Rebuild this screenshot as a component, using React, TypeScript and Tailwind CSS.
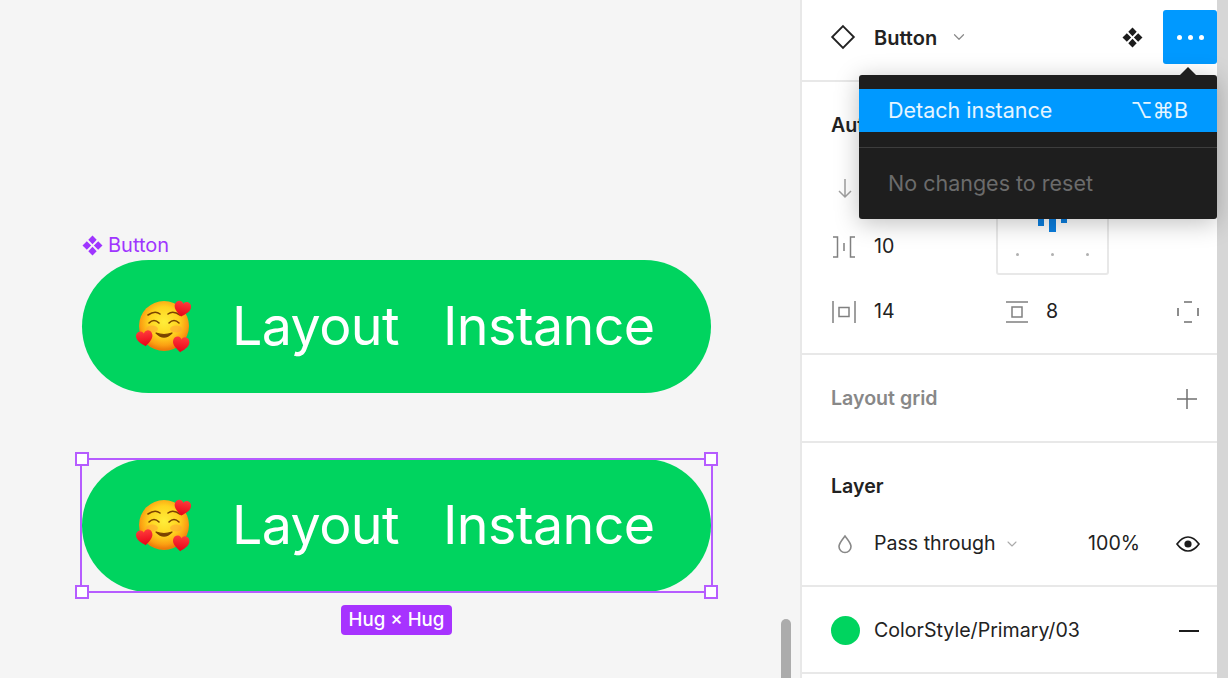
import React from "react";
import { ChevronDown } from "lucide-react";

const ComponentIcon = ({ className = "" }: { className?: string }) => (
  <svg viewBox="0 0 20 20" className={className} fill="currentColor">
    <path d="M10 0.5 L14 4.6 L10 8.7 L6 4.6 Z" />
    <path d="M10 11.3 L14 15.4 L10 19.5 L6 15.4 Z" />
    <path d="M4.6 6 L8.7 10 L4.6 14 L0.5 10 Z" />
    <path d="M15.4 6 L19.5 10 L15.4 14 L11.3 10 Z" />
  </svg>
);

const Heart = ({ x, y, s = 1, r = 0 }: { x: number; y: number; s?: number; r?: number }) => (
  <path
    transform={`translate(${x} ${y}) rotate(${r}) scale(${s})`}
    d="M0 7.5 C-3 5 -7.5 2.2 -7.5 -2 C-7.5 -5 -5.2 -6.5 -3.4 -6.5 C-1.8 -6.5 -0.6 -5.6 0 -4.2 C0.6 -5.6 1.8 -6.5 3.4 -6.5 C5.2 -6.5 7.5 -5 7.5 -2 C7.5 2.2 3 5 0 7.5 Z"
    fill="url(#heart-fill)"
  />
);

const Emoji = ({ id }: { id: string }) => (
  <svg viewBox="0 0 56 56" className="w-[56px] h-[56px] shrink-0">
    <defs>
      <radialGradient id={`${id}-face`} cx="50%" cy="42%" r="55%">
        <stop offset="0%" stopColor="#ffee3a" />
        <stop offset="55%" stopColor="#ffd21f" />
        <stop offset="85%" stopColor="#fb9f12" />
        <stop offset="100%" stopColor="#ee7c0a" />
      </radialGradient>
      <linearGradient id="heart-fill" x1="0" y1="0" x2="0" y2="1">
        <stop offset="0%" stopColor="#ff3b3b" />
        <stop offset="100%" stopColor="#e80018" />
      </linearGradient>
    </defs>
    <circle cx="29" cy="28" r="25" fill={`url(#${id}-face)`} />
    <ellipse cx="17" cy="31" rx="6" ry="3.5" fill="#ff9a3a" opacity="0.45" />
    <ellipse cx="41" cy="31" rx="6" ry="3.5" fill="#ff9a3a" opacity="0.45" />
    <g fill="none" stroke="#7a4300" strokeWidth="1.6" strokeLinecap="round">
      <path d="M13 17 Q20 12 25 16" />
      <path d="M33 16 Q38 12 45 17" />
      <path d="M14 25 Q19 20 24 25" />
      <path d="M34 25 Q39 20 44 25" />
    </g>
    <path d="M21 35 Q29 43 37 35 Q29 38 21 35 Z" fill="#7a4300" stroke="#7a4300" strokeWidth="1.2" strokeLinejoin="round" />
    <Heart x={47.5} y={10.5} s={1.1} r={10} />
    <Heart x={9.5} y={40} s={1.1} r={-8} />
    <Heart x={46} y={46} s={1.1} r={6} />
  </svg>
);

const PillButton = ({ id }: { id: string }) => (
  <div className="flex items-center w-[629px] h-[132.5px] rounded-full bg-[#00d45f] pl-[53px] text-white text-[53.75px] leading-none tracking-[-0.6px]">
    <Emoji id={id} />
    <span className="ml-[41px]">Layout</span>
    <span className="ml-[44px]">Instance</span>
  </div>
);

const Handle = ({ className }: { className: string }) => (
  <span className={`absolute w-[14px] h-[14px] bg-white border-[2.5px] border-[#b65cff] ${className}`} />
);

const Canvas = () => (
  <div className="relative w-[800px] h-full bg-[#f5f5f5] pl-[82px] pt-[233px] overflow-hidden">
    <div className="flex items-center gap-[5px] h-[24px] mb-[3px] text-[#9f35ff] text-[20px]">
      <ComponentIcon className="w-[21px] h-[21px]" />
      <span>Button</span>
    </div>
    <PillButton id="first" />
    <div className="relative mt-[66.5px] w-[629px]">
      <PillButton id="second" />
      <div className="absolute -left-[2px] -right-[2px] -top-[1px] -bottom-[1px] border-[2.5px] border-[#b65cff]" />
      <Handle className="-left-[7px] -top-[7px]" />
      <Handle className="-right-[7px] -top-[7px]" />
      <Handle className="-left-[7px] -bottom-[7px]" />
      <Handle className="-right-[7px] -bottom-[7px]" />
      <div className="absolute left-[259px] top-[146px] h-[30px] w-[111px] pt-[1px] rounded-[4px] bg-[#a733ff] flex items-center justify-center text-white text-[18.7px] font-medium">
        Hug × Hug
      </div>
    </div>
    <div className="absolute left-[781px] top-[619px] w-[10px] h-[80px] rounded-full bg-[#acacac]" />
  </div>
);

const Section = ({ className = "", children }: { className?: string; children: React.ReactNode }) => (
  <div className={`border-b-2 border-[#e8e8e8] pl-[29px] ${className}`}>{children}</div>
);

const Popup = () => (
  <div className="absolute left-[57px] top-[75px] w-[358px] h-[144px] rounded-[3px] bg-[#1e1e1e] shadow-[0_4px_24px_rgba(0,0,0,0.25)] pt-[14px] text-[21.5px]">
    <span className="absolute right-[21px] -top-[8px] w-0 h-0 border-x-[8px] border-x-transparent border-b-[8px] border-b-[#1e1e1e]" />
    <div className="flex items-center justify-between h-[43px] bg-[#0099ff] pl-[29px] pr-[29px] text-white/90">
      <span>Detach instance</span>
      <span>⌥⌘B</span>
    </div>
    <div className="mt-[15px] border-t border-[#3d3d3d]" />
    <div className="pl-[29px] mt-[19px] text-[#6b6b6b]">No changes to reset</div>
  </div>
);

const Sidebar = () => (
  <div className="relative w-[428px] h-full flex border-l-2 border-[#e8e8e8] bg-white text-[#222] text-[19.6px]">
    <div className="w-[415px] shrink-0">
      <Section className="h-[82px] pb-[6px] flex items-center">
        <svg viewBox="0 0 24 24" className="w-[26px] h-[26px] -ml-[1px] text-[#222]" fill="none" stroke="currentColor" strokeWidth="1.7">
          <path d="M12 2 L22 12 L12 22 L2 12 Z" />
        </svg>
        <span className="ml-[18px] pt-[1px] text-[20px] font-semibold">Button</span>
        <ChevronDown className="ml-[13px] w-[18px] h-[18px] text-[#8a8a8a]" strokeWidth={1.6} />
        <ComponentIcon className="ml-auto mr-[20px] w-[21px] h-[21px] text-[#1c1c1c]" />
        <div className="w-[54px] h-[54px] rounded-[3px] bg-[#0099ff] flex items-center justify-center gap-[6px]">
          <span className="w-[5px] h-[5px] rounded-full bg-white" />
          <span className="w-[5px] h-[5px] rounded-full bg-white" />
          <span className="w-[5px] h-[5px] rounded-full bg-white" />
        </div>
      </Section>

      <Section className="h-[273px] pr-[17px] pt-[29px]">
        <div className="font-semibold leading-[28px]">Auto layout</div>
        <div className="relative h-[123px] mt-[8px]">
          <svg viewBox="0 0 20 24" className="absolute left-[4px] top-[29px] w-[20px] h-[24px] text-[#a0a0a0]" fill="none" stroke="currentColor" strokeWidth="1.5">
            <path d="M10 3 V21 M4 15 L10 21 L16 15" />
          </svg>
          <div className="absolute left-[165px] top-0 w-[113px] h-[128px] rounded-[3px] border-2 border-[#e8e8e8]">
            <div className="absolute left-[40px] top-[65px] flex items-start gap-[5px]">
              <span className="w-[6px] h-[12px] bg-[#0b7fe0]" />
              <span className="w-[7px] h-[18px] bg-[#0b7fe0]" />
              <span className="w-[6px] h-[9px] bg-[#0b7fe0]" />
            </div>
            <div className="absolute left-[18px] top-[104px] flex gap-[32px]">
              <span className="w-[3px] h-[3px] rounded-full bg-[#b0b0b0]" />
              <span className="w-[3px] h-[3px] rounded-full bg-[#b0b0b0]" />
              <span className="w-[3px] h-[3px] rounded-full bg-[#b0b0b0]" />
            </div>
          </div>
          <div className="absolute left-0 top-[85px] flex items-center h-[30px]">
            <svg viewBox="0 0 26 24" className="w-[26px] h-[24px] text-[#808080]" fill="none" stroke="currentColor" strokeWidth="1.5">
              <path d="M2 2 H6.5 V22 H2 M24 2 H19.5 V22 H24 M13 8 V16" />
            </svg>
            <span className="ml-[17px]">10</span>
          </div>
        </div>
        <div className="flex items-center h-[30px] mt-[27px]">
          <svg viewBox="0 0 26 24" className="w-[26px] h-[24px] text-[#808080]" fill="none" stroke="currentColor" strokeWidth="1.5">
            <path d="M2 1 V23 M24 1 V23" />
            <rect x="8" y="7.5" width="10" height="9" />
          </svg>
          <span className="ml-[17px] w-[131px]">14</span>
          <svg viewBox="0 0 24 24" className="w-[24px] h-[24px] text-[#808080]" fill="none" stroke="currentColor" strokeWidth="1.5">
            <path d="M1 2 H23 M1 22 H23" />
            <rect x="7" y="7" width="10" height="10" />
          </svg>
          <span className="ml-[17px]">8</span>
          <svg viewBox="0 0 24 24" className="ml-auto w-[24px] h-[24px] text-[#707070]" fill="none" stroke="currentColor" strokeWidth="1.6">
            <path d="M8 2 H16 M8 22 H16 M2 8 V16 M22 8 V16" />
          </svg>
        </div>
      </Section>

      <Section className="h-[88px] pr-[18px] pt-[2px] flex items-center justify-between">
        <span className="font-semibold text-[#888]">Layout grid</span>
        <svg viewBox="0 0 24 24" className="w-[24px] h-[24px] text-[#707070]" fill="none" stroke="currentColor" strokeWidth="1.5">
          <path d="M12 2 V22 M2 12 H22" />
        </svg>
      </Section>

      <Section className="h-[144px] pr-[17px] pt-[29px]">
        <div className="font-semibold leading-[28px]">Layer</div>
        <div className="flex items-center h-[30px] mt-[29px]">
          <svg viewBox="0 0 20 24" className="w-[20px] h-[24px] ml-[4px] text-[#888]" fill="none" stroke="currentColor" strokeWidth="1.6">
            <path d="M10 4 C7 8 4 11 4 14.5 A6 6 0 0 0 16 14.5 C16 11 13 8 10 4 Z" />
          </svg>
          <span className="ml-[19px]">Pass through</span>
          <ChevronDown className="ml-[8px] w-[16px] h-[16px] text-[#aaa]" strokeWidth={1.6} />
          <span className="ml-auto">100%</span>
          <svg viewBox="0 0 24 24" className="ml-[36px] w-[24px] h-[24px] text-[#1c1c1c]" fill="none" stroke="currentColor" strokeWidth="1.7">
            <path d="M1 12 C5 6.5 8.5 5 12 5 C15.5 5 19 6.5 23 12 C19 17.5 15.5 19 12 19 C8.5 19 5 17.5 1 12 Z" />
            <circle cx="12" cy="12" r="3.6" fill="currentColor" stroke="none" />
          </svg>
        </div>
      </Section>

      <Section className="h-[87px] pr-[17px] pt-[2px] flex items-center">
        <span className="w-[29px] h-[29px] rounded-full bg-[#00d45f]" />
        <span className="ml-[14px]">ColorStyle/Primary/03</span>
        <span className="ml-auto w-[20px] h-[2px] bg-[#1c1c1c] mr-[1px]" />
      </Section>
    </div>
    <div className="flex-1 bg-[#d6d6d6]" />
    <Popup />
  </div>
);

export default function App() {
  return (
    <div className="flex w-[1228px] h-[678px] overflow-hidden" style={{ fontFamily: "Inter, 'Noto Sans', sans-serif" }}>
      <Canvas />
      <Sidebar />
    </div>
  );
}
